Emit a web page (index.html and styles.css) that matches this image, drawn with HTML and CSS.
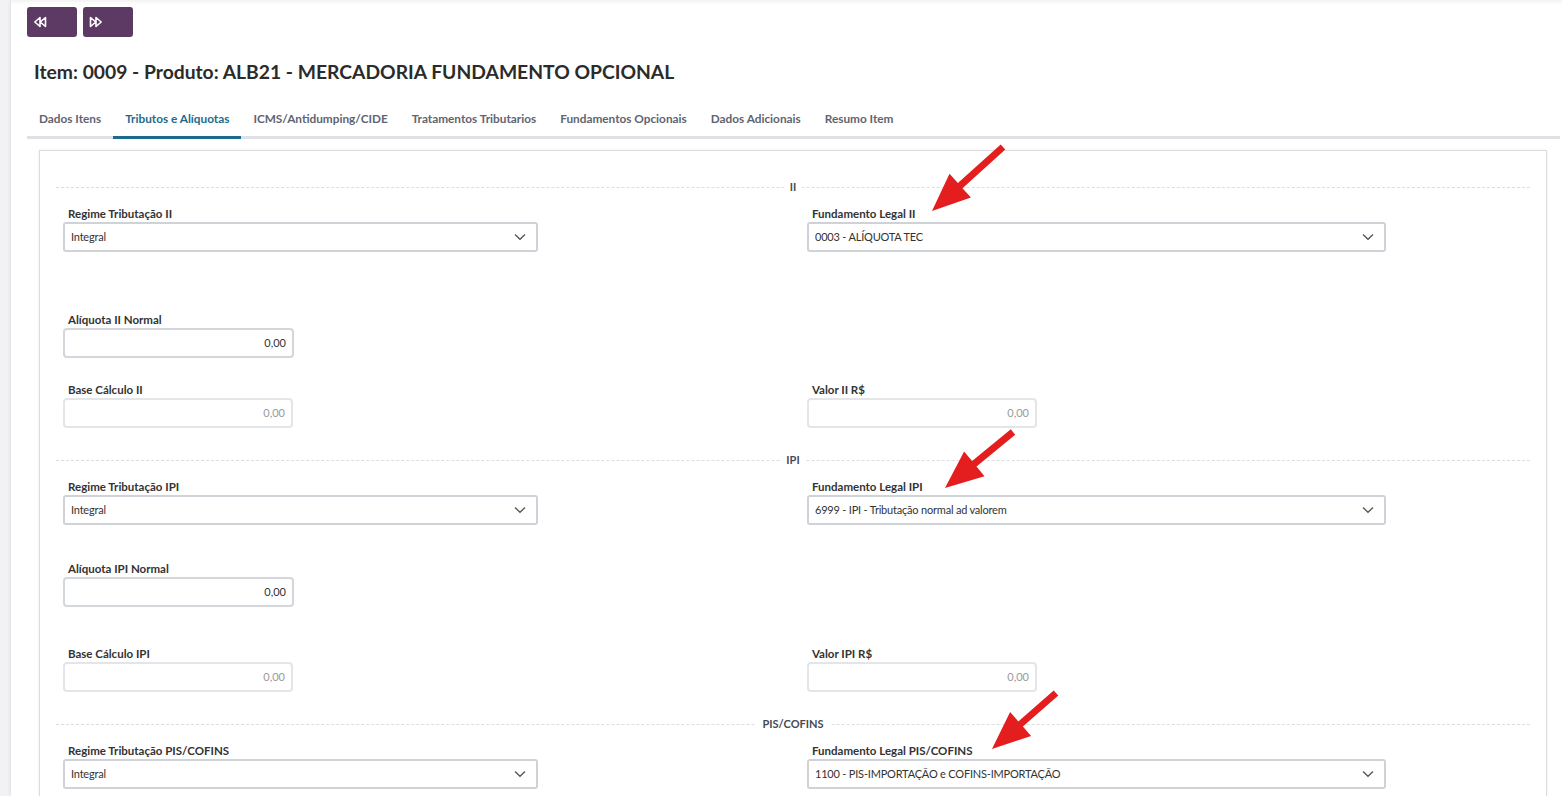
FILE: index.html
```html
<!DOCTYPE html>
<html lang="pt-BR">
<head>
<meta charset="utf-8">
<title>Item 0009</title>
<link rel="stylesheet" href="styles.css">
</head>
<body>
<div class="page">
  <div class="toolbar">
    <button class="nav-btn" aria-label="Anterior">
      <svg width="14" height="12" viewBox="0 0 14 12"><path d="M7 1.5 L1.8 6 L7 10.5 Z M12.5 1.5 L7.3 6 L12.5 10.5 Z" fill="none" stroke="#fff" stroke-width="1.6" stroke-linejoin="round"/></svg>
    </button>
    <button class="nav-btn" aria-label="Próximo">
      <svg width="14" height="12" viewBox="0 0 14 12"><path d="M1.5 1.5 L6.7 6 L1.5 10.5 Z M7 1.5 L12.2 6 L7 10.5 Z" fill="none" stroke="#fff" stroke-width="1.6" stroke-linejoin="round"/></svg>
    </button>
  </div>

  <h1 class="title">Item: 0009 - Produto: ALB21 - MERCADORIA FUNDAMENTO OPCIONAL</h1>

  <nav class="tabs">
    <a class="tab">Dados Itens</a>
    <a class="tab active">Tributos e Alíquotas</a>
    <a class="tab">ICMS/Antidumping/CIDE</a>
    <a class="tab">Tratamentos Tributarios</a>
    <a class="tab">Fundamentos Opcionais</a>
    <a class="tab">Dados Adicionais</a>
    <a class="tab">Resumo Item</a>
  </nav>

  <div class="panel">
    <div class="sep sep-first"><span>II</span></div>
    <div class="row row-1">
      <div class="field">
        <label>Regime Tributação II</label>
        <div class="select sel-left"><span>Integral</span><svg class="chev" width="12" height="8" viewBox="0 0 12 8"><path d="M1 1.5 L6 6.3 L11 1.5" fill="none" stroke="#555" stroke-width="1.3"/></svg></div>
      </div>
      <div class="field">
        <label>Fundamento Legal II</label>
        <div class="select sel-right"><span>0003 - ALÍQUOTA TEC</span><svg class="chev" width="12" height="8" viewBox="0 0 12 8"><path d="M1 1.5 L6 6.3 L11 1.5" fill="none" stroke="#555" stroke-width="1.3"/></svg></div>
      </div>
    </div>
    <div class="row row-2a">
      <div class="field">
        <label>Alíquota II Normal</label>
        <div class="input">0,00</div>
      </div>
    </div>
    <div class="row row-3a">
      <div class="field">
        <label>Base Cálculo II</label>
        <div class="input disabled">0,00</div>
      </div>
      <div class="field">
        <label>Valor II R$</label>
        <div class="input disabled">0,00</div>
      </div>
    </div>

    <div class="sep"><span>IPI</span></div>
    <div class="row row-1">
      <div class="field">
        <label>Regime Tributação IPI</label>
        <div class="select sel-left"><span>Integral</span><svg class="chev" width="12" height="8" viewBox="0 0 12 8"><path d="M1 1.5 L6 6.3 L11 1.5" fill="none" stroke="#555" stroke-width="1.3"/></svg></div>
      </div>
      <div class="field">
        <label>Fundamento Legal IPI</label>
        <div class="select sel-right"><span>6999 - IPI - Tributação normal ad valorem</span><svg class="chev" width="12" height="8" viewBox="0 0 12 8"><path d="M1 1.5 L6 6.3 L11 1.5" fill="none" stroke="#555" stroke-width="1.3"/></svg></div>
      </div>
    </div>
    <div class="row row-2b">
      <div class="field">
        <label>Alíquota IPI Normal</label>
        <div class="input">0,00</div>
      </div>
    </div>
    <div class="row row-3b">
      <div class="field">
        <label>Base Cálculo IPI</label>
        <div class="input disabled">0,00</div>
      </div>
      <div class="field">
        <label>Valor IPI R$</label>
        <div class="input disabled">0,00</div>
      </div>
    </div>

    <div class="sep"><span>PIS/COFINS</span></div>
    <div class="row row-1">
      <div class="field">
        <label>Regime Tributação PIS/COFINS</label>
        <div class="select sel-left"><span>Integral</span><svg class="chev" width="12" height="8" viewBox="0 0 12 8"><path d="M1 1.5 L6 6.3 L11 1.5" fill="none" stroke="#555" stroke-width="1.3"/></svg></div>
      </div>
      <div class="field">
        <label>Fundamento Legal PIS/COFINS</label>
        <div class="select sel-right"><span>1100 - PIS-IMPORTAÇÃO e COFINS-IMPORTAÇÃO</span><svg class="chev" width="12" height="8" viewBox="0 0 12 8"><path d="M1 1.5 L6 6.3 L11 1.5" fill="none" stroke="#555" stroke-width="1.3"/></svg></div>
      </div>
    </div>
  </div>
</div>

<svg class="arrows" width="1562" height="796" viewBox="0 0 1562 796">
  <polygon fill="#e41e1e" points="932,211 970.9,197.5 962.5,188.2 1005.3,149.6 1000.7,144.4 957.9,183.0 949.5,173.7"/>
  <polygon fill="#e41e1e" points="945,488 984.5,476.2 976.5,466.5 1015.2,434.7 1010.8,429.3 972.1,461.1 964.1,451.4"/>
  <polygon fill="#e41e1e" points="992,749 1031.1,736.0 1022.9,726.6 1058.3,695.6 1053.7,690.4 1018.3,721.4 1010.1,712.0"/>
</svg>
</body>
</html>
```

FILE: styles.css
```css
* { box-sizing: border-box; }

html, body {
  margin: 0;
  padding: 0;
}

body {
  background: #f2f2f5;
  font-family: Lato, "Liberation Sans", sans-serif;
  color: #333;
  overflow: hidden;
  height: 796px;
}

.page {
  margin-left: 11px;
  background: #fff;
  height: 796px;
  padding: 7px 2px 0 16px;
  box-shadow: -1px 0 3px rgba(0,0,0,0.08), inset 0 5px 5px -4px rgba(0,0,0,0.08);
}

.toolbar {
  display: flex;
  gap: 6px;
}

.nav-btn {
  width: 50px;
  height: 30px;
  border: none;
  border-radius: 3px;
  background: #5c3a63;
  padding: 0 0 0 6px;
  display: flex;
  align-items: center;
  justify-content: flex-start;
}

.title {
  margin: 23px 0 0 7px;
  font-size: 19.3px;
  font-weight: 700;
  line-height: 24px;
  color: #2b2b2b;
}

.tabs {
  display: flex;
  margin-top: 21px;
  border-bottom: 3px solid #dfe1e5;
}

.tab {
  font-size: 11.8px;
  font-weight: 700;
  color: #5f6470;
  padding: 7px 12px 10px;
  line-height: 14px;
  margin-bottom: -3px;
  border-bottom: 3px solid transparent;
}

.tab.active {
  color: #1d6b8c;
  border-bottom-color: #1d6b8c;
}

.panel {
  margin: 11px 13px 0 12px;
  border: 1px solid #dcdcdc;
  border-bottom: none;
  box-shadow: 0 0 3px rgba(0,0,0,0.08);
  padding: 29px 16px 0;
  height: 646px;
  overflow: hidden;
}

.sep {
  position: relative;
  height: 14px;
  display: flex;
  justify-content: center;
  align-items: center;
  margin-top: 25px;
}

.sep-first { margin-top: 0; }

.sep::before {
  content: "";
  position: absolute;
  left: 0;
  right: 0;
  top: 7px;
  border-top: 1px dashed #dcdde2;
}

.sep span {
  position: relative;
  background: #fff;
  padding: 0 6px;
  font-size: 11px;
  font-weight: 700;
  color: #444a55;
  line-height: 14px;
}

.row {
  display: grid;
  grid-template-columns: 744px 1fr;
  padding-left: 7px;
}

.row-1 { margin-top: 13px; }
.row-2a { margin-top: 61px; }
.row-3a { margin-top: 25px; }
.row-2b { margin-top: 37px; }
.row-3b { margin-top: 40px; }

.field label {
  display: block;
  font-size: 11.5px;
  font-weight: 700;
  color: #333;
  line-height: 14px;
  height: 15px;
  padding-left: 5px;
  white-space: nowrap;
}

.select {
  height: 30px;
  border: 2px solid #cfd3d8;
  border-radius: 3px;
  display: flex;
  align-items: center;
  justify-content: space-between;
  padding: 0 10px 1px 6px;
  font-size: 11px;
  letter-spacing: -0.2px;
  color: #333;
  background: #fff;
}

.sel-left { width: 475px; }
.sel-right { width: 579px; }

.chev { flex: none; }

.input {
  width: 231px;
  height: 30px;
  border: 2px solid #d3d6db;
  border-radius: 4px;
  font-size: 11px;
  color: #333;
  text-align: right;
  padding: 0 6px;
  line-height: 26px;
}

.input.disabled {
  width: 230px;
  border-color: #e3e5e9;
  color: #999;
}

.arrows {
  position: absolute;
  left: 0;
  top: 0;
  pointer-events: none;
}
```
